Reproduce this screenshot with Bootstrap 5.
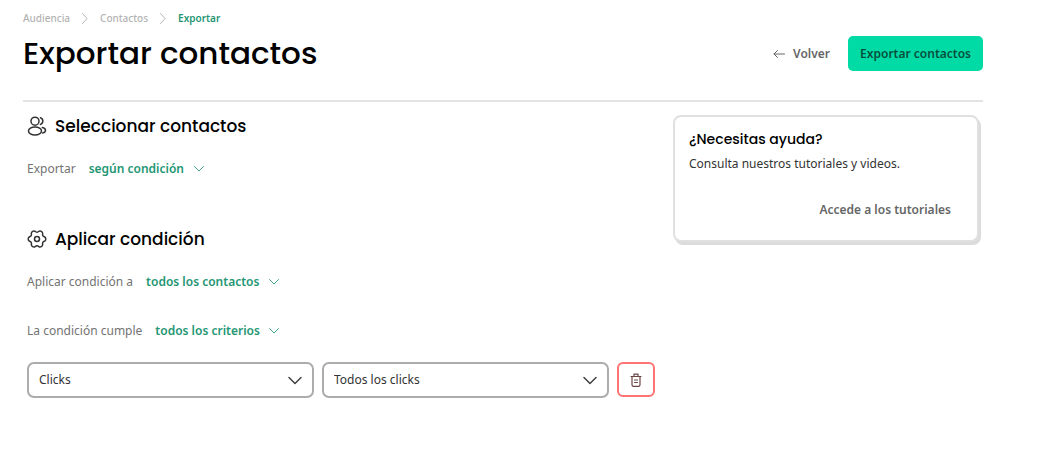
<!DOCTYPE html>
<html lang="es">
<head>
<meta charset="utf-8">
<meta name="viewport" content="width=device-width, initial-scale=1">
<title>Exportar contactos</title>
<link href="https://cdn.jsdelivr.net/npm/bootstrap@5.3.0/dist/css/bootstrap.min.css" rel="stylesheet">
<style>
  body { font-family: "Noto Sans", "Open Sans", sans-serif; font-size: 12px; line-height: 20px; color: #333; background: #fff; }
  h1, h2, h3 { font-family: Poppins, Inter, sans-serif; font-weight: 500; color: #000; }
  h1 { font-size: 31px; line-height: 35px; }
  h2 { font-size: 17px; line-height: 24px; }
  h3 { font-size: 14px; line-height: 20px; }
  a { text-decoration: none; color: #666; }
  svg { fill: none; stroke: currentColor; stroke-linecap: round; stroke-linejoin: round; flex: none; }
  .page { padding: 10px 66px 24px 23px; }
  .breadcrumb { --bs-breadcrumb-font-size: 10px; line-height: 16px; font-weight: 500; gap: 12px; color: #b3b3b3; }
  .breadcrumb a { color: #b3b3b3; }
  .breadcrumb .current { color: #249674; font-weight: 600; }
  .page-head { margin-top: 10px; padding-bottom: 29px; border-bottom: 2px solid #e3e3e3; }
  .back { font-weight: 600; gap: 8px; margin-right: 18px; }
  .btn-export { --bs-btn-bg: #00dba5; --bs-btn-color: #04503d; --bs-btn-hover-bg: #00c896; --bs-btn-border-width: 0;
    --bs-btn-font-size: 12px; --bs-btn-font-weight: 600; --bs-btn-padding-x: 12px; --bs-btn-border-radius: 5px; height: 35px; line-height: 20px; }
  .main-col { padding: 12px 8px 0 4px; }
  .side-col { padding: 13px 4px 0 10px; }
  .section-title { gap: 8px; margin-bottom: 21px; }
  .section-title svg { color: #333; }
  .field { gap: 13px; margin-bottom: 29px; color: #737373; }
  .field.last { margin-bottom: 21px; }
  .section-gap { margin-bottom: 48px; }
  .inline-select { appearance: none; border: 0; padding: 0 20px 0 0; color: #249674; font: inherit; font-weight: 600;
    background: url("data:image/svg+xml,%3Csvg xmlns='http://www.w3.org/2000/svg' width='12' height='8' fill='none' stroke='%2342a78a' stroke-linecap='round'%3E%3Cpath d='M1.500 1.500L6 6l4.500-4.500'/%3E%3C/svg%3E") no-repeat right center; }
  .criteria { gap: 8px; }
  .box-select { --bs-form-select-bg-img: none; height: 36px; border: 2px solid #acacac; border-radius: 7px; font-size: 12px; line-height: 20px; color: #333;
    padding: 6px 40px 6px 10px; background: #fff url("data:image/svg+xml,%3Csvg xmlns='http://www.w3.org/2000/svg' width='14' height='9' fill='none' stroke='%23404040' stroke-width='1.500' stroke-linecap='round' stroke-linejoin='round'%3E%3Cpath d='M1 1.500L7 7.500l6-6'/%3E%3C/svg%3E") no-repeat right 10px center; }
  .btn-trash { width: 38px; height: 35px; border: 2px solid #ff7373; border-radius: 6px; color: #6e4545; background: #fff; }
  .help { --bs-card-border-color: #e0e0e0; --bs-card-border-width: 2px; --bs-card-border-radius: 8px; box-shadow: 2px 3px 0 #dcdcdc; padding: 12px 14px 20px; }
  .help p { margin: 5px 0 26px; }
  .help a { font-weight: 600; padding-right: 12px; }
</style>
</head>
<body>
<div class="page">
  <nav aria-label="Ruta">
    <ol class="breadcrumb mb-0 align-items-center">
      <li><a href="#">Audiencia</a></li>
      <li class="d-flex" aria-hidden="true"><svg width="6" height="11"><path d="M.5.500L5 5.500.500 10.500"/></svg></li>
      <li><a href="#">Contactos</a></li>
      <li class="d-flex" aria-hidden="true"><svg width="6" height="11"><path d="M.5.500L5 5.500.500 10.500"/></svg></li>
      <li class="current" aria-current="page">Exportar</li>
    </ol>
  </nav>
  <header class="page-head d-flex justify-content-between align-items-center">
    <h1 class="mb-0">Exportar contactos</h1>
    <div class="d-flex align-items-center">
      <a href="#" class="back d-flex align-items-center"><svg width="12" height="10"><path d="M11.500 5H1M4.500 1.500L1 5l3.500 3.500"/></svg>Volver</a>
      <button type="button" class="btn btn-export">Exportar contactos</button>
    </div>
  </header>
  <div class="row g-0">
    <main class="main-col col-8">
      <section class="section-gap">
        <h2 class="section-title d-flex align-items-center"><svg width="20" height="20" viewBox="0 0 20 20" stroke-width="1.500"><circle cx="8" cy="5.200" r="4"/><ellipse cx="8" cy="15" rx="6.500" ry="4"/><path d="M13.500 1.800a3.500 3.500 0 0 1 0 6.600M15.300 11.500c1.900.500 3.200 1.400 3.200 2.700 0 1.300-1.100 2.300-2.800 2.700"/></svg>Seleccionar contactos</h2>
        <div class="field d-flex align-items-center">
          <label for="export-mode">Exportar</label>
          <select id="export-mode" class="inline-select"><option>según condición</option></select>
        </div>
      </section>
      <section>
        <h2 class="section-title d-flex align-items-center"><svg width="20" height="20" viewBox="0 0 20 20" stroke-width="1.500"><circle cx="10" cy="10" r="2.500"/><path d="M17.460 7.720A2.600 2.600 0 0 1 17.460 12.280A2.200 2.200 0 0 0 15.700 15.320A2.600 2.600 0 0 1 11.750 17.600A2.200 2.200 0 0 0 8.250 17.600A2.600 2.600 0 0 1 4.300 15.320A2.200 2.200 0 0 0 2.540 12.280A2.600 2.600 0 0 1 2.540 7.720A2.200 2.200 0 0 0 4.300 4.680A2.600 2.600 0 0 1 8.250 2.400A2.200 2.200 0 0 0 11.750 2.400A2.600 2.600 0 0 1 15.700 4.680A2.200 2.200 0 0 0 17.460 7.720z"/></svg>Aplicar condición</h2>
        <div class="field d-flex align-items-center">
          <label for="apply-to">Aplicar condición a</label>
          <select id="apply-to" class="inline-select"><option>todos los contactos</option></select>
        </div>
        <div class="field last d-flex align-items-center">
          <label for="match-mode">La condición cumple</label>
          <select id="match-mode" class="inline-select"><option>todos los criterios</option></select>
        </div>
        <div class="criteria d-flex">
          <select class="form-select box-select" aria-label="Criterio"><option>Clicks</option></select>
          <select class="form-select box-select" aria-label="Valor"><option>Todos los clicks</option></select>
          <button type="button" class="btn-trash d-flex flex-shrink-0 align-items-center justify-content-center p-0" aria-label="Eliminar criterio"><svg width="12" height="14" viewBox="0 0 12 14" stroke-width="1.200"><path d="M1 3.500h10M4 3.500V1.200h4v2.300M2 3.500v8.200c0 1 .6 1.600 1.600 1.600h4.800c1 0 1.600-.6 1.600-1.600V3.500M4.500 7h3M4.500 9.500h3"/></svg></button>
        </div>
      </section>
    </main>
    <aside class="side-col col-4">
      <div class="card help">
        <h3 class="mb-0">¿Necesitas ayuda?</h3>
        <p>Consulta nuestros tutoriales y videos.</p>
        <a href="#" class="align-self-end">Accede a los tutoriales</a>
      </div>
    </aside>
  </div>
</div>
<script src="https://cdn.jsdelivr.net/npm/bootstrap@5.3.0/dist/js/bootstrap.bundle.min.js"></script>
</body>
</html>
